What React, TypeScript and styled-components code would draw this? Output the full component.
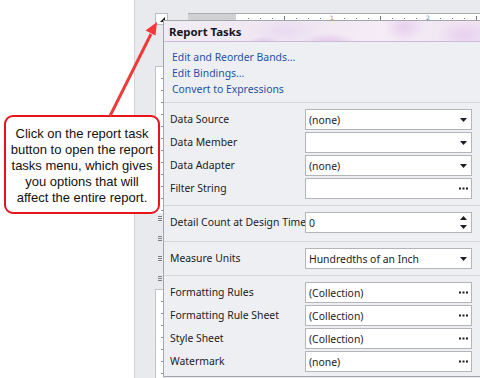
import React from 'react';
import styled, { createGlobalStyle } from 'styled-components';

const Global = createGlobalStyle`
  html, body { margin: 0; padding: 0; }
  body {
    width: 480px;
    height: 378px;
    overflow: hidden;
    background: #ffffff;
    font-family: "Noto Sans", "Open Sans", sans-serif;
  }
`;

const Screen = styled.div`
  position: relative;
  width: 480px;
  height: 378px;
  display: flex;
  overflow: hidden;
`;

const OutlinePane = styled.div`
  width: 134px;
  flex: none;
  background: #ffffff;
`;

const Surface = styled.div`
  position: relative;
  flex: 1;
  background: #e9eaee;
  border-left: 1px solid #d2d3d8;
  padding: 13px 0 0 20px;
  display: flex;
  flex-direction: column;
`;

const TopStrip = styled.div`
  display: flex;
  align-items: flex-start;
  height: 12px;
`;

const TaskButton = styled.div`
  width: 13px;
  height: 12px;
  box-sizing: border-box;
  background: #ffffff;
  border: 1px solid #b9bac0;
  display: flex;
  align-items: flex-end;
  justify-content: flex-end;
  padding: 0 2px 2px 0;
`;

const HRuler = styled.div`
  flex: 1;
  margin-left: 20px;
  height: 7px;
  box-sizing: border-box;
  border-top: 1px solid #a9abb0;
  background: linear-gradient(90deg, #cfd0d4 0 48px, #ffffff 48px);
`;

const VRuler = styled.div`
  width: 8px;
  margin-top: 41px;
  flex: 1;
  display: flex;
  flex-direction: column;
`;

const RulerSegment = styled.div<{ $h?: number }>`
  ${(p) => (p.$h ? `height: ${p.$h}px;` : 'flex: 1;')}
  box-sizing: border-box;
  background-color: #ffffff;
  border-left: 1px solid #c2c3c8;
  border-top: 1px solid #c2c3c8;
  background-image: repeating-linear-gradient(
    180deg,
    transparent 0 11px,
    #8a8b90 11px 12px
  );
  background-size: 2px 100%;
  background-position: 5px 0;
  background-repeat: no-repeat;
`;

const HandleStack = styled.div`
  height: 76px;
  display: flex;
  flex-direction: column;
  gap: 14px;
  padding-top: 3px;
  box-sizing: border-box;
`;

const Handle = styled.div`
  width: 4px;
  height: 6px;
  margin-left: 3px;
  background: repeating-linear-gradient(180deg, #7d7e84 0 1px, transparent 1px 2px);
`;

const Panel = styled.div`
  position: absolute;
  left: 28px;
  top: 20px;
  width: 317px;
  height: 357px;
  box-sizing: border-box;
  background: #eeeff2;
  border: 1px solid #a3a5ad;
  border-right: none;
  display: flex;
  flex-direction: column;
  font-size: 10.4px;
  color: #1b1b1f;
`;

const Header = styled.div`
  height: 23px;
  box-sizing: border-box;
  border-bottom: 1px solid #cdb9d8;
  padding-left: 5px;
  display: flex;
  align-items: center;
  font-weight: 700;
  font-size: 11.4px;
  color: #161620;
  background:
    radial-gradient(ellipse 40px 14px at 165px 22px, rgba(214, 168, 226, 0.55), transparent 70%),
    radial-gradient(ellipse 30px 22px at 240px 6px, rgba(222, 190, 232, 0.6), transparent 70%),
    radial-gradient(ellipse 50px 18px at 120px 10px, rgba(230, 205, 238, 0.5), transparent 70%),
    radial-gradient(ellipse 24px 10px at 100px 22px, rgba(200, 150, 215, 0.45), transparent 70%),
    radial-gradient(ellipse 40px 20px at 300px 14px, rgba(226, 196, 236, 0.6), transparent 70%),
    linear-gradient(90deg, #f1ecf4 0%, #efe6f3 45%, #f5edf6 70%, #efe2f2 100%);
`;

const LinkList = styled.div`
  display: flex;
  flex-direction: column;
  padding: 7px 0 5px 8px;
`;

const TaskLink = styled.a`
  line-height: 16px;
  color: #1f4fa6;
  text-decoration: none;
  cursor: pointer;
`;

const Section = styled.div<{ $padBottom?: number }>`
  border-top: 1px solid #d5d6db;
  padding: 6px 8px ${(p) => p.$padBottom ?? 6}px 6px;
  display: grid;
  grid-template-columns: 135px 167px;
  row-gap: 2px;
  align-items: center;
`;

const Label = styled.div`
  white-space: nowrap;
  line-height: 21px;
`;

const Field = styled.div`
  height: 21px;
  box-sizing: border-box;
  background: #ffffff;
  border: 1px solid #b3b5bb;
  display: flex;
  align-items: center;
  padding: 0 2px 0 3px;
  white-space: nowrap;
`;

const FieldValue = styled.span`
  flex: 1;
`;

const FieldButton = styled.span`
  width: 12px;
  height: 100%;
  display: flex;
  align-items: center;
  justify-content: center;
`;

const Callout = styled.div`
  position: absolute;
  left: 4px;
  top: 115px;
  width: 156px;
  height: 99px;
  box-sizing: border-box;
  background: #ffffff;
  border: 2px solid #e8141c;
  border-radius: 9px;
  display: flex;
  align-items: center;
  justify-content: center;
  text-align: center;
  padding-top: 2px;
  font-family: "Liberation Sans", Arial, sans-serif;
  font-size: 13px;
  line-height: 16px;
  color: #111111;
`;

const Overlay = styled.svg`
  position: absolute;
  left: 0;
  top: 0;
  pointer-events: none;
`;

const Caret = () => (
  <svg width="7" height="4" viewBox="0 0 7 4">
    <polygon points="0,0 7,0 3.5,4" fill="#1d1d2a" />
  </svg>
);

const Ellipsis = () => (
  <svg width="9" height="3" viewBox="0 0 9 3">
    <rect x="0" y="0.5" width="2" height="2" fill="#1d1d2a" />
    <rect x="3.5" y="0.5" width="2" height="2" fill="#1d1d2a" />
    <rect x="7" y="0.5" width="2" height="2" fill="#1d1d2a" />
  </svg>
);

const Spin = () => (
  <svg width="7" height="13" viewBox="0 0 7 13">
    <polygon points="0,4 7,4 3.5,0" fill="#1d1d2a" />
    <polygon points="0,9 7,9 3.5,13" fill="#1d1d2a" />
  </svg>
);

type Kind = 'drop' | 'dots' | 'spin';

const Row = ({ label, value, kind }: { label: string; value: string; kind: Kind }) => (
  <>
    <Label>{label}</Label>
    <Field>
      <FieldValue>{value}</FieldValue>
      <FieldButton>{kind === 'drop' ? <Caret /> : kind === 'dots' ? <Ellipsis /> : <Spin />}</FieldButton>
    </Field>
  </>
);

const RulerTicks = () => {
  const ticks: React.ReactNode[] = [];
  for (let i = 1; i < 30; i++) {
    const x = 48 + i * 12;
    const major = i % 4 === 0 && i % 8 !== 0;
    if (i % 8 === 0) continue;
    ticks.push(
      <rect key={i} x={x} y={major ? 2 : 4} width={1} height={major ? 4 : 1} fill="#77787e" />
    );
  }
  return (
    <svg width="292" height="6" viewBox="0 0 292 6" style={{ display: 'block' }}>
      {ticks}
      <text x="144" y="6" fontSize="6" fill="#c07a30" fontFamily="DejaVu Sans" textAnchor="middle">1</text>
      <text x="240" y="6" fontSize="6" fill="#4a7fc8" fontFamily="DejaVu Sans" textAnchor="middle">2</text>
    </svg>
  );
};

export default function App() {
  return (
    <>
      <Global />
      <Screen>
        <OutlinePane />
        <Surface>
          <TopStrip>
            <TaskButton>
              <svg width="5" height="5" viewBox="0 0 5 5">
                <polygon points="5,0 5,5 0,5" fill="#111" />
              </svg>
            </TaskButton>
            <HRuler>
              <RulerTicks />
            </HRuler>
          </TopStrip>
          <VRuler>
            <RulerSegment $h={147} />
            <HandleStack>
              <Handle />
              <Handle />
              <Handle />
              <Handle />
            </HandleStack>
            <RulerSegment />
          </VRuler>
          <Panel>
            <Header>Report Tasks</Header>
            <LinkList>
              <TaskLink>Edit and Reorder Bands...</TaskLink>
              <TaskLink>Edit Bindings...</TaskLink>
              <TaskLink>Convert to Expressions</TaskLink>
            </LinkList>
            <Section>
              <Row label="Data Source" value="(none)" kind="drop" />
              <Row label="Data Member" value="" kind="drop" />
              <Row label="Data Adapter" value="(none)" kind="drop" />
              <Row label="Filter String" value="" kind="dots" />
            </Section>
            <Section $padBottom={8}>
              <Row label="Detail Count at Design Time" value="0" kind="spin" />
            </Section>
            <Section>
              <Row label="Measure Units" value="Hundredths of an Inch" kind="drop" />
            </Section>
            <Section $padBottom={4}>
              <Row label="Formatting Rules" value="(Collection)" kind="dots" />
              <Row label="Formatting Rule Sheet" value="(Collection)" kind="dots" />
              <Row label="Style Sheet" value="(Collection)" kind="dots" />
              <Row label="Watermark" value="(none)" kind="dots" />
            </Section>
          </Panel>
        </Surface>
        <Callout>
          Click on the report task
          <br />
          button to open the report
          <br />
          tasks menu, which gives
          <br />
          you options that will
          <br />
          affect the entire report.
        </Callout>
        <Overlay width="480" height="378" viewBox="0 0 480 378">
          <line x1="110" y1="116" x2="151" y2="34" stroke="#f03a3a" strokeWidth="3" />
          <polygon points="157,22 145.5,30.5 155.5,35.5" fill="#f03a3a" />
        </Overlay>
      </Screen>
    </>
  );
}
